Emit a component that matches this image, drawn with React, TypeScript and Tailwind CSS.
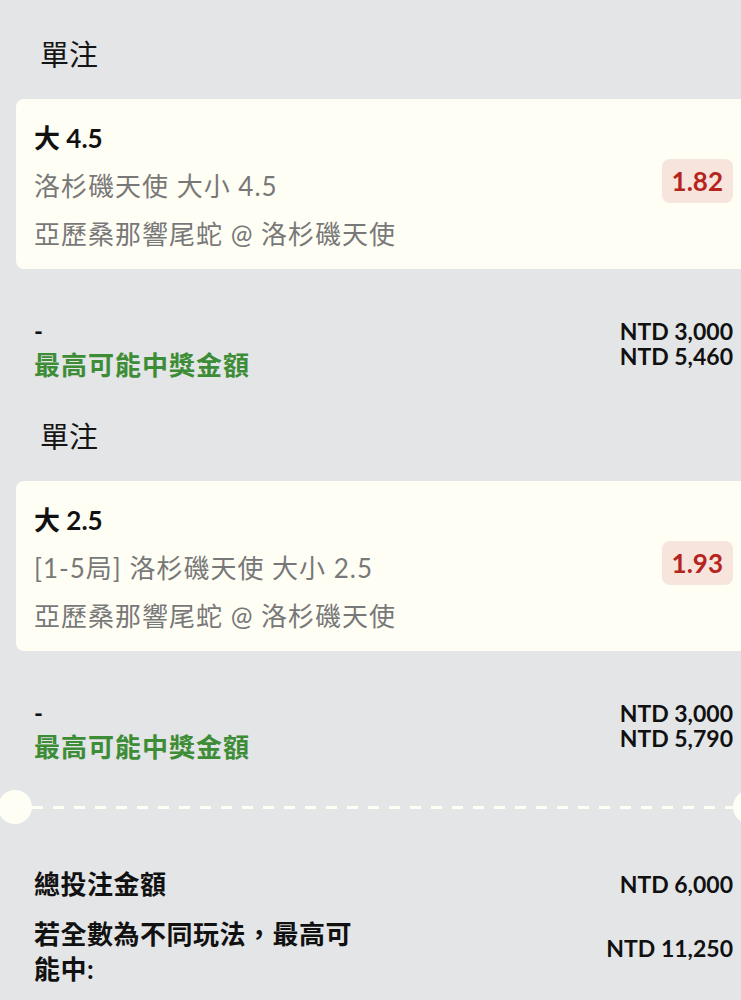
import React from 'react'

type Bet = {
    pick: string
    market: string
    match: string
    odds: string
    stake: string
    payout: string
}

const bets: Bet[] = [
    {
        pick: '大 4.5',
        market: '洛杉磯天使 大小 4.5',
        match: '亞歷桑那響尾蛇 @ 洛杉磯天使',
        odds: '1.82',
        stake: 'NTD 3,000',
        payout: 'NTD 5,460',
    },
    {
        pick: '大 2.5',
        market: '[1-5局] 洛杉磯天使 大小 2.5',
        match: '亞歷桑那響尾蛇 @ 洛杉磯天使',
        odds: '1.93',
        stake: 'NTD 3,000',
        payout: 'NTD 5,790',
    },
]

const latin = "font-['Lato','Noto_Sans_CJK_TC',sans-serif]"

const BetBlock = ({ bet, first }: { bet: Bet; first: boolean }) => (
    <div className="flex flex-col">
        {/* title */}
        <div
            className={`pl-[40px] text-[29px] leading-[40px] text-[#151515] font-['Noto_Sans_CJK_TC',sans-serif] ${first ? 'pt-[33px]' : 'pt-[34px]'}`}
        >
            單注
        </div>

        {/* card */}
        <div className="mx-4 mt-[26px] flex justify-between rounded-[8px] bg-[#fffef5] pl-[18px] pr-4 pt-[15px] pb-[11px]">
            <div className="flex flex-col text-[26px] leading-[48px]">
                <div className={`${latin} font-bold text-[#111]`}>{bet.pick}</div>
                <div className={`${latin} tracking-[1px] text-[#787878]`}>{bet.market}</div>
                <div className={`${latin} tracking-[1px] text-[#787878]`}>{bet.match}</div>
            </div>
            <div className="mb-[10px] flex h-[44px] items-center self-center rounded-[8px] bg-[#f7e4dd] px-[10px]">
                <span className={`${latin} text-[26px] font-bold text-[#b5251d]`}>{bet.odds}</span>
            </div>
        </div>

        {/* stake / payout */}
        <div className="mt-[50px] flex justify-between pl-[34px] pr-[32px]">
            <div className="flex flex-col">
                <div className={`${latin} text-[24px] font-bold leading-[24px] text-[#111]`}>-</div>
                <div className={`${latin} mt-[6px] text-[26px] font-bold tracking-[1px] leading-[32px] text-[#3d8c36]`}>
                    最高可能中獎金額
                </div>
            </div>
            <div className={`${latin} flex flex-col items-end text-[23px] font-bold leading-[25px] text-[#111]`}>
                <div>{bet.stake}</div>
                <div>{bet.payout}</div>
            </div>
        </div>
    </div>
)

const Divider = () => (
    <div className="mt-[27px] flex h-[34px] items-center">
        <div className="ml-[-2px] h-[34px] w-[34px] shrink-0 rounded-full bg-[#fffef5]" />
        <div className="h-[3px] flex-1 bg-[repeating-linear-gradient(to_right,#fffef5_0_11px,transparent_11px_21px)]" />
        <div className="mr-[-2px] h-[34px] w-[34px] shrink-0 rounded-full bg-[#fffef5]" />
    </div>
)

export default function App() {
    return (
        <div className="h-[1000px] w-[741px] overflow-hidden bg-[#e4e5e7]">
            <div className="flex w-[765px] flex-col">
                {bets.map((bet, i) => (
                    <BetBlock key={bet.odds} bet={bet} first={i === 0} />
                ))}

                <Divider />

                {/* totals */}
                <div className={`${latin} mt-[43px] flex flex-col pl-[34px] pr-[32px] font-bold text-[#111]`}>
                    <div className="flex items-center justify-between leading-[34px]">
                        <span className="text-[26px] tracking-[0.5px]">總投注金額</span>
                        <span className="text-[23px]">NTD 6,000</span>
                    </div>
                    <div className="mt-[16px] flex items-center justify-between">
                        <span className="w-[330px] text-[26px] tracking-[0.5px] leading-[35px]">若全數為不同玩法，最高可能中:</span>
                        <span className="mb-[8px] text-[23px] leading-[34px]">NTD 11,250</span>
                    </div>
                </div>
            </div>
        </div>
    )
}
